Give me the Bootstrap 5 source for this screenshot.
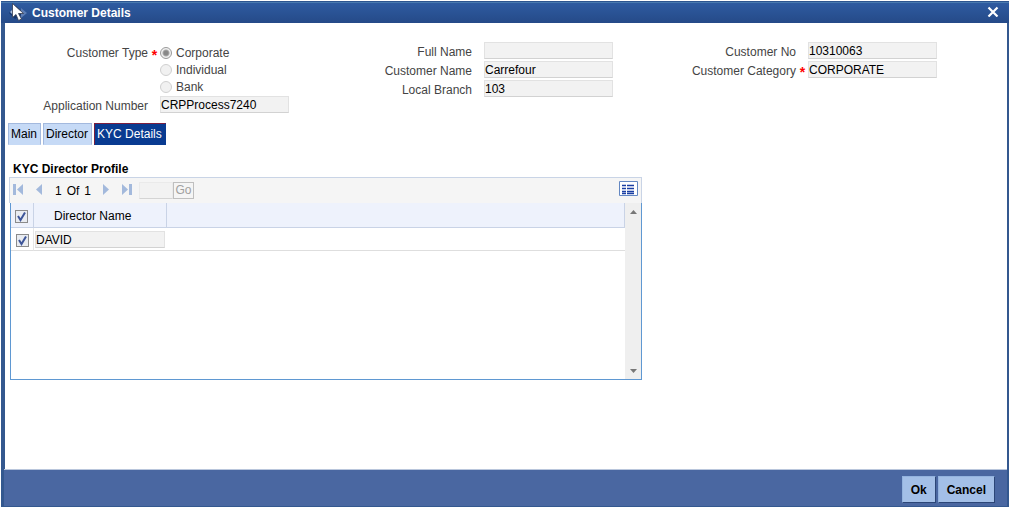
<!DOCTYPE html>
<html lang="en">
<head>
<meta charset="utf-8">
<meta name="viewport" content="width=device-width, initial-scale=1">
<title>Customer Details</title>
<link href="https://cdn.jsdelivr.net/npm/bootstrap@5.3.0/dist/css/bootstrap.min.css" rel="stylesheet">
<style>
body { font: 12px/16px "Liberation Sans", Arial, sans-serif; color: #000; background: #fff; }
button, input { font: inherit; }
.dialog { min-height: 100vh; padding: 1px 0 0 1px; }
.frame { border: solid #34588f; border-width: 0 2px 0 4px; }
.title-bar { height: 22px; margin: 0 -2px 0 -4px; padding: 0 10px 0 8px; background: linear-gradient(#2f5ca2, #254a88); border-top: 1px solid #2c5590; box-shadow: inset 0 1px #4a7bb0; }
.title-bar h1 { font-size: 12px; line-height: 20px; color: #fff; font-weight: bold; padding-left: 3px; }
.icon-btn { background: none; border: 0; padding: 0; line-height: 0; }
.icon-btn svg { display: block; }
.form-area { padding: 19px 26px 0 4px; }
.radio-area { height: 54px; }
.radio-area > * { padding-top: 2px; }
.field { height: 19px; }
.field-label { flex: 0 0 139px; text-align: right; color: #444; line-height: 20px; }
.radio-area .field-label { padding-top: 1px; }
.star { flex: 0 0 12px; padding-left: 1px; text-align: center; color: #f00; font-size: 14px; line-height: 22px; font-weight: bold; }
.box { width: 129px; height: 17px; padding: 0 1px 0 0; border: 1px solid #e2e2e2; border-bottom-color: #d2d2d2; border-radius: 0; background: #f2f2f2; color: #000; line-height: 15px; }
.radio-row { height: 17px; gap: 4px; color: #444; }
.radio-row input { appearance: none; width: 12px; height: 12px; margin: 0; border: 1px solid #d0d0d0; border-radius: 50%; background: #f1f1f1; }
.radio-row input:checked { border-color: #999; background: radial-gradient(circle, #888 0 2px, #aaa 3px, #f1f1f1 4px); }
.tabs { margin: 8px 0 0 3px; gap: 2px; }
.tab-btn { height: 22px; padding: 1px 3px 0 2px; border: 1px solid #a3b9de; border-bottom-color: #c6daf6; background: #c6daf6; color: #000; line-height: 19px; }
.tab-btn.active { background: #093b91; border-color: #7c1f3e #093b91 #093b91 #7c1f3e; color: #fff; }
.section-title { font-size: 12px; line-height: 16px; font-weight: bold; margin: 16px 0 0 8px; }
.grid-panel { width: 633px; max-width: 100%; margin-left: 4px; }
.pager { height: 26px; padding: 0 3px; background: #f5f5f5; border: 1px solid #c9d4e6; border-bottom: 0; }
.pager-nav { gap: 12px; padding-bottom: 3px; }
.page-count { gap: 5px; margin: 0 12px 0 13px; padding-top: 1px; }
.page-box { width: 34px; height: 17px; margin-left: 7px; padding: 0 2px; border: 1px solid #eaeaea; border-bottom-color: #d4d4d4; border-radius: 0; background: #f2f2f2; }
.go-btn { width: 21px; height: 17px; padding: 0; border: 1px solid #bfbfbf; background: #f5f5f5; color: #a0a0a0; line-height: 15px; }
.grid-body { height: 177px; margin-left: 1px; border: 1px solid #5f98d2; border-top: 0; }
.data-grid { width: 100%; table-layout: fixed; border-collapse: separate; border-spacing: 0; }
.data-grid th { height: 25px; padding: 2px 0 0; background: #eef2fc; border: solid #c9d3e6; border-width: 0 1px 1px 0; font-weight: normal; text-align: left; }
.data-grid .name-head { padding-left: 20px; }
.data-grid td { height: 23px; padding: 1px 1px 0; border-bottom: 1px solid #dedede; }
.data-grid td:first-child { border-right: 1px solid #e6e6e6; padding-top: 3px; }
.data-grid .box { display: block; width: 130px; }
.data-grid td { vertical-align: middle; }
.col-tick { width: 23px; }
.col-name { width: 133px; }
.tick { appearance: none; display: block; width: 13px; height: 13px; margin: 0 0 0 4px; border: 1px solid #8b8b8b; background: #e9ecf1 url("data:image/svg+xml,%3Csvg xmlns='http://www.w3.org/2000/svg' viewBox='0 0 11 11'%3E%3Cpath d='M2 5l2.500 4L9 1.500' fill='none' stroke='%233d5599' stroke-width='2'/%3E%3C/svg%3E") center/11px no-repeat; }
.scroll-track { flex: 0 0 16px; background: #efefef; padding: 7px 0 6px; }
.footer-bar { min-height: 38px; margin-left: -1px; padding: 6px 12px 3px; gap: 2px; background: #4a67a1; border-top: 1px solid #b9c6dc; border-bottom: 1px solid #34588f; }
.action-btn { height: 27px; padding: 0 8px; border: 1px solid #93b3df; border-right-color: #2c4677; border-bottom-color: #2c4677; background: #a3bfe7; color: #000; font-weight: bold; }
</style>
</head>
<body>
<main class="dialog d-flex flex-column">
<div class="frame d-flex flex-column flex-grow-1">
  <header class="title-bar d-flex align-items-center">
    <svg width="20" height="20" viewBox="0 0 20 20" aria-hidden="true"><path d="M7 3L0 10l6 6 9-6z" fill="#143770"/><path d="M1 9l3-3v6z" fill="#a9bddd"/><path d="M12 5l6 5-6 5z" fill="#5c7db4"/><path d="M3.500.5v14l3.500-3 2.500 6 3-1.500-3-5.500h5z" fill="#fff" stroke="#333a4d" stroke-width=".8"/></svg>
    <h1 class="m-0">Customer Details</h1>
    <button class="icon-btn ms-auto pb-1" type="button" aria-label="Close"><svg width="12" height="12" viewBox="0 0 12 12"><path d="M1.500 2.500l9 9M10.500 2.500l-9 9" stroke="#fff" stroke-width="2.200"/></svg></button>
  </header>
  <form class="form-area">
    <div class="row g-0">
      <div class="col-4">
        <div class="radio-area d-flex" role="radiogroup" aria-labelledby="ctype">
          <span class="field-label" id="ctype">Customer Type</span><span class="star">*</span>
          <div>
            <div class="radio-row d-flex align-items-center"><input type="radio" name="type" id="r1" checked disabled><label for="r1">Corporate</label></div>
            <div class="radio-row d-flex align-items-center"><input type="radio" name="type" id="r2" disabled><label for="r2">Individual</label></div>
            <div class="radio-row d-flex align-items-center"><input type="radio" name="type" id="r3" disabled><label for="r3">Bank</label></div>
          </div>
        </div>
        <div class="field d-flex"><label class="field-label" for="app">Application Number</label><span class="star"></span><input class="box" id="app" value="CRPProcess7240" readonly></div>
      </div>
      <div class="col-4">
        <div class="field d-flex"><label class="field-label" for="fn">Full Name</label><span class="star"></span><input class="box" id="fn" readonly></div>
        <div class="field d-flex"><label class="field-label" for="cn">Customer Name</label><span class="star"></span><input class="box" id="cn" value="Carrefour" readonly></div>
        <div class="field d-flex"><label class="field-label" for="lb">Local Branch</label><span class="star"></span><input class="box" id="lb" value="103" readonly></div>
      </div>
      <div class="col-4">
        <div class="field d-flex"><label class="field-label" for="no">Customer No</label><span class="star"></span><input class="box" id="no" value="10310063" readonly></div>
        <div class="field d-flex"><label class="field-label" for="cat">Customer Category</label><span class="star">*</span><input class="box" id="cat" value="CORPORATE" readonly></div>
      </div>
    </div>
  </form>
  <nav class="tabs d-flex" role="tablist">
    <button class="tab-btn" type="button" role="tab">Main</button>
    <button class="tab-btn" type="button" role="tab">Director</button>
    <button class="tab-btn active" type="button" role="tab" aria-selected="true">KYC Details</button>
  </nav>
  <h2 class="section-title">KYC Director Profile</h2>
  <section class="grid-panel">
    <div class="pager d-flex align-items-center">
      <div class="pager-nav d-flex">
        <button class="icon-btn" type="button" aria-label="First page"><svg width="11" height="11" viewBox="0 0 11 11" fill="#a3b9dc"><path d="M0 0h3v11H0zM10 0v11L4 5.500z"/></svg></button>
        <button class="icon-btn" type="button" aria-label="Previous page"><svg width="6" height="11" viewBox="0 0 6 11" fill="#a3b9dc"><path d="M6 0v11L0 5.500z"/></svg></button>
      </div>
      <div class="page-count d-flex"><span>1</span><span>Of</span><span>1</span></div>
      <div class="pager-nav d-flex">
        <button class="icon-btn" type="button" aria-label="Next page"><svg width="6" height="11" viewBox="0 0 6 11" fill="#a3b9dc"><path d="M0 0v11l6-5.500z"/></svg></button>
        <button class="icon-btn" type="button" aria-label="Last page"><svg width="11" height="11" viewBox="0 0 11 11" fill="#a3b9dc"><path d="M8 0h3v11H8zM1 0v11l6-5.500z"/></svg></button>
      </div>
      <input class="page-box" type="text" aria-label="Page number" disabled>
      <button class="go-btn" type="button" disabled>Go</button>
      <button class="icon-btn ms-auto pb-1" type="button" aria-label="Single record view"><svg width="19" height="15" viewBox="0 0 19 15"><path d="M.5.5h18v14H.5z" fill="#fff" stroke="#6387c2"/><path d="M3 4.500h4M8 4.500h7M3 7.500h4M8 7.500h7M3 10.500h4M8 10.500h7M3 12.500h4M8 12.500h7" stroke="#1a3fa3" stroke-width="1.400"/></svg></button>
    </div>
    <div class="grid-body d-flex">
      <div class="flex-grow-1">
        <table class="data-grid">
          <colgroup><col class="col-tick"><col class="col-name"><col></colgroup>
          <thead><tr><th><input class="tick" type="checkbox" checked aria-label="Select all"></th><th class="name-head">Director Name</th><th></th></tr></thead>
          <tbody><tr><td><input class="tick ms-1" type="checkbox" checked aria-label="Select row"></td><td><input class="box" value="DAVID" aria-label="Director Name" readonly></td><td></td></tr></tbody>
        </table>
      </div>
      <div class="scroll-track d-flex flex-column justify-content-between align-items-center" aria-hidden="true">
        <svg width="7" height="4" viewBox="0 0 7 4"><path d="M0 4h7L3.500 0z" fill="#777"/></svg>
        <svg width="7" height="4" viewBox="0 0 7 4"><path d="M0 0h7L3.500 4z" fill="#777"/></svg>
      </div>
    </div>
  </section>
  <footer class="footer-bar d-flex justify-content-end align-items-start mt-auto">
    <button class="action-btn" type="button">Ok</button>
    <button class="action-btn" type="button">Cancel</button>
  </footer>
</div>
</main>
<script src="https://cdn.jsdelivr.net/npm/bootstrap@5.3.0/dist/js/bootstrap.bundle.min.js"></script>
</body>
</html>
